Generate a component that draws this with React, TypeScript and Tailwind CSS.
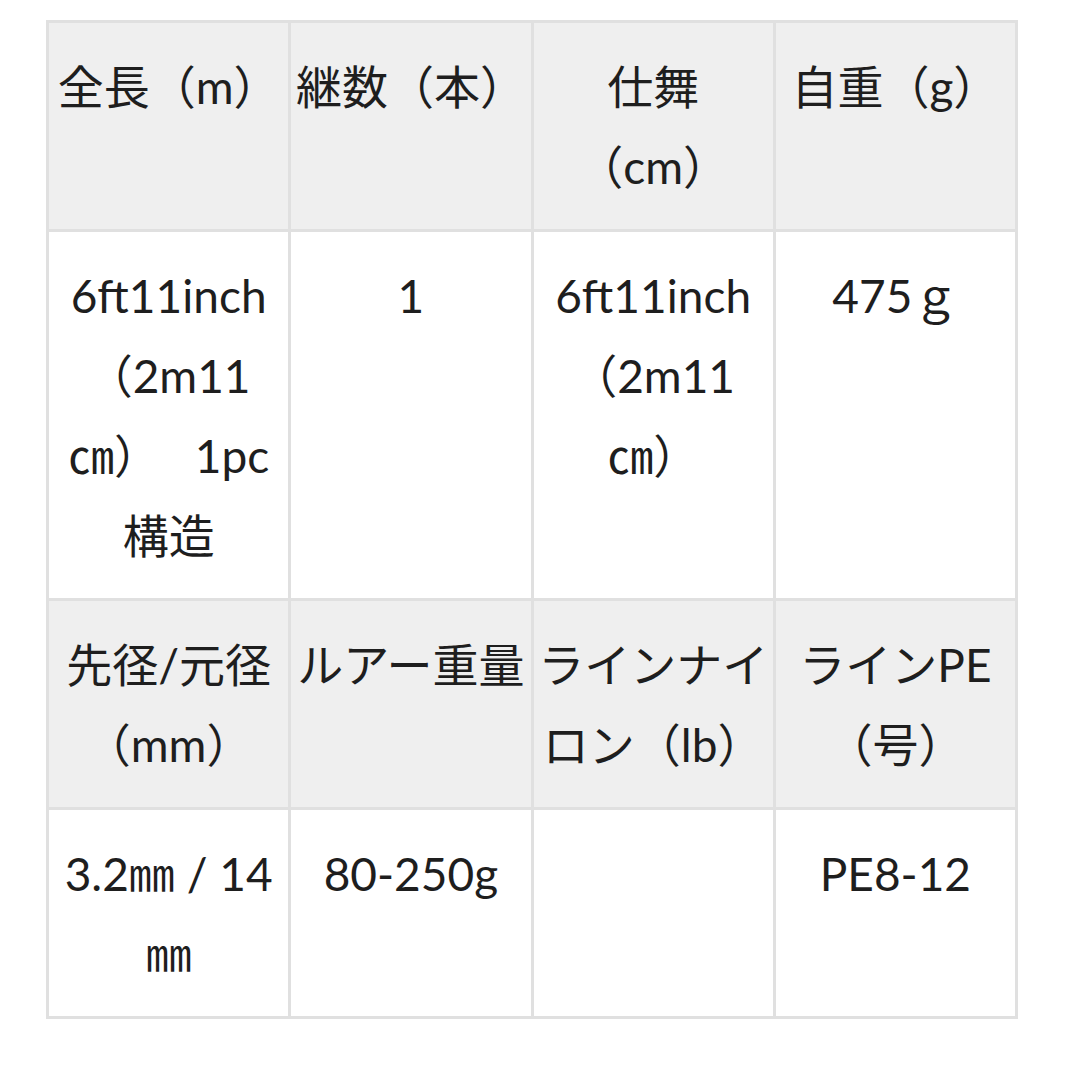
import { Fragment } from "react";

const headA = ["全長（m）", "継数（本）", "仕舞\n（cm）", "自重（g）"];
const rowA = ["6ft11inch（2m11㎝）　 1pc構造", "1", "6ft11inch（2m11㎝）", "475ｇ"];
const headB = ["先径/元径（mm）", "ルアー重量", "ラインナイロン（lb）", "ラインPE（号）"];
const rowB = ["3.2㎜ / 14㎜", "80-250g", "", "PE8-12"];

const Row = ({ cells, head }: { cells: string[]; head?: boolean }) => (
  <tr className={head ? "bg-[#efefef]" : "bg-white"}>
    {cells.map((c, i) => (
      <td
        key={i}
        className="border-[3px] border-[#e0e0e0] px-[4px] pt-[24px] pb-[22px] align-top text-center leading-[80px] break-words"
      >
        {c.split("\n").map((part, j) => (
          <Fragment key={j}>
            {j > 0 && <br />}
            {part}
          </Fragment>
        ))}
      </td>
    ))}
  </tr>
);

export default function App() {
  return (
    <div
      className="w-[1080px] h-[1080px] bg-white pt-[20px] pl-[46px] text-[46px] text-[#1e1e1e]"
      style={{ fontFamily: 'Lato, "Noto Sans CJK JP", sans-serif' }}
    >
      <table className="w-[972px] table-fixed border-collapse">
        <tbody>
          <Row cells={headA} head />
          <Row cells={rowA} />
          <Row cells={headB} head />
          <Row cells={rowB} />
        </tbody>
      </table>
    </div>
  );
}
